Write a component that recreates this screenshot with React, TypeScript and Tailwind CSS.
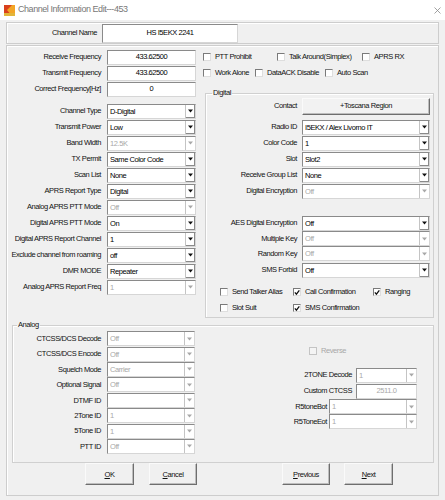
import * as React from "react"

const sunken =
  "border border-t-[#8a8a8a] border-l-[#8a8a8a] border-r-[#d6d6d6] border-b-[#d6d6d6] bg-white"

const Arrow = ({ off }: { off?: boolean }) => (
  <svg width="5" height="4" viewBox="0 0 5 4">
    <polygon points="0,0.5 5,0.5 2.5,3.5" fill={off ? "#a8a8a8" : "#111"} />
  </svg>
)

const Select = ({ value, off, w }: { value: string; off?: boolean; w: string }) => (
  <div className={`flex h-[15px] ${w} ${sunken}`}>
    <span className={`flex-1 truncate pl-[2px] leading-[13px] ${off ? "text-[#a8a8a8]" : "text-black"}`}>
      {value}
    </span>
    <span
      className={`flex w-[10px] items-center justify-center border-l border-[#c4c4c4] ${
        off ? "" : "shadow-[inset_-1px_-1px_0_#8a8a8a]"
      }`}
    >
      <Arrow off={off} />
    </span>
  </div>
)

const Input = ({ value, off, w, h }: { value: string; off?: boolean; w: string; h?: string }) => (
  <div className={`flex items-center justify-center ${h ?? "h-[15px]"} ${w} ${sunken} ${off ? "text-[#a8a8a8]" : "text-black"}`}>
    {value}
  </div>
)

const Check = ({ label, on, off, className }: { label: string; on?: boolean; off?: boolean; className?: string }) => (
  <div className={`flex items-center ${className ?? ""}`}>
    <span
      className={`flex h-[8px] w-[8px] shrink-0 items-center justify-center border ${
        off
          ? "border-[#c4c4c4] bg-[#f4f4f4]"
          : "border-t-[#7a7a7a] border-l-[#7a7a7a] border-r-[#dedede] border-b-[#dedede] bg-white"
      }`}
    >
      {on && (
        <svg width="7" height="7" viewBox="0 0 7 7">
          <path d="M1 3.3 L2.8 5.4 L6.2 1" stroke="#111" strokeWidth="1.5" fill="none" />
        </svg>
      )}
    </span>
    <span className={`ml-[4px] whitespace-nowrap ${off ? "text-[#a8a8a8]" : ""}`}>{label}</span>
  </div>
)

const Row = ({ label, lw, h, children }: { label: string; lw: string; h?: string; children: React.ReactNode }) => (
  <div className={`flex items-center ${h ?? "h-[16px]"}`}>
    <span className={`${lw} shrink-0 whitespace-nowrap text-right`}>{label}</span>
    {children}
  </div>
)

const Btn = ({ u, rest, ml, w }: { u: string; rest: string; ml: string; w: string }) => (
  <div
    className={`${ml} ${w} flex h-[22px] items-center justify-center border border-t-[#fafafa] border-l-[#fafafa] border-r-[#6e6e6e] border-b-[#6e6e6e] bg-[#f0f0f0] shadow-[inset_-1px_-1px_0_#bdbdbd]`}
  >
    <span className="underline decoration-[0.5px] underline-offset-1">{u}</span>
    {rest}
  </div>
)

const leftRows: { label: string; value: string; off?: boolean }[] = [
  { label: "Channel Type", value: "D-Digital" },
  { label: "Transmit Power", value: "Low" },
  { label: "Band Width", value: "12.5K", off: true },
  { label: "TX Permit", value: "Same Color Code" },
  { label: "Scan List", value: "None" },
  { label: "APRS Report Type", value: "Digital" },
  { label: "Analog APRS PTT Mode", value: "Off", off: true },
  { label: "Digital APRS PTT Mode", value: "On" },
  { label: "Digital APRS Report Channel", value: "1" },
  { label: "Exclude channel from roaming", value: "off" },
  { label: "DMR MODE", value: "Repeater" },
  { label: "Analog APRS Report Freq", value: "1", off: true },
]

const analogRows: { label: string; value: string }[] = [
  { label: "CTCSS/DCS Decode", value: "Off" },
  { label: "CTCSS/DCS Encode", value: "Off" },
  { label: "Squelch Mode", value: "Carrier" },
  { label: "Optional Signal", value: "Off" },
  { label: "DTMF ID", value: "" },
  { label: "2Tone ID", value: "1" },
  { label: "5Tone ID", value: "1" },
  { label: "PTT ID", value: "Off" },
]

export default function App() {
  return (
    <div className="h-[500px] w-[445px] overflow-hidden bg-[#f0f0f0] font-['Liberation_Sans',Arial,sans-serif] text-[7.5px] tracking-[-0.42px] text-[#111]">
      {/* title bar */}
      <div className="flex h-[20px] items-center bg-white">
        <svg className="ml-[4px]" width="11" height="11" viewBox="0 0 11 11">
          <rect x="0" y="0" width="11" height="11" fill="#f3a526" />
          <polygon points="0,0 8,0 3,5 8,11 0,11" fill="#d9401c" />
          <rect x="0" y="8" width="11" height="3" fill="#e2b53a" />
        </svg>
        <span className="ml-[3px] text-[9px] tracking-[-0.45px] text-[#777]">Channel Information Edit---453</span>
        <svg className="ml-auto mr-[4px]" width="7" height="7" viewBox="0 0 7 7">
          <path d="M0.5 0.5 L6.5 6.5 M6.5 0.5 L0.5 6.5" stroke="#8a8a8a" strokeWidth="0.8" />
        </svg>
      </div>

      <div className="px-[6px] pt-[2px]">
        {/* channel name */}
        <div className="flex h-[22px] items-center border border-[#cdcdcd] shadow-[inset_1px_1px_0_#fff]">
          <span className="w-[90px] text-right">Channel Name</span>
          <Input value="HS I5EKX 2241" w="w-[136px] ml-[5px]" h="h-[19px]" />
        </div>

        {/* main panel */}
        <div className="mt-px border border-[#cdcdcd] pt-[3px] pb-[10px] shadow-[inset_1px_1px_0_#fff]">
          <div className="flex">
            <div className="w-[193px] shrink-0">
              <Row label="Receive Frequency" lw="w-[94px]">
                <Input value="433.62500" w="w-[89px] ml-[6px]" />
              </Row>
              <Row label="Transmit Frequency" lw="w-[94px]">
                <Input value="433.62500" w="w-[89px] ml-[6px]" />
              </Row>
              <Row label="Correct Frequency[Hz]" lw="w-[94px]">
                <Input value="0" w="w-[89px] ml-[6px]" />
              </Row>
              <div className="mt-[6px]">
                {leftRows.map((r) => (
                  <Row key={r.label} label={r.label} lw="w-[94px]">
                    <Select value={r.value} off={r.off} w="w-[89px] ml-[6px]" />
                  </Row>
                ))}
              </div>
            </div>

            <div className="flex-1">
              <div className="flex h-[16px] items-center pl-[3px]">
                <Check label="PTT Prohibit" className="w-[74px]" />
                <Check label="Talk Around(Simplex)" className="w-[85px]" />
                <Check label="APRS RX" />
              </div>
              <div className="flex h-[16px] items-center pl-[3px]">
                <Check label="Work Alone" className="w-[52px]" />
                <Check label="DataACK Disable" className="w-[70px]" />
                <Check label="Auto Scan" />
              </div>

              <fieldset className="mt-[8px] ml-[5px] w-[229px] border border-[#d0d0d0] pb-px shadow-[inset_1px_1px_0_#fff]">
                <legend className="ml-[6px] px-px leading-[8px]">Digital</legend>
                <Row label="Contact" lw="w-[91px]" h="h-[18px]">
                  <div className="ml-[5px] flex h-[17px] w-[128px] items-center justify-center border border-t-[#fafafa] border-l-[#fafafa] border-r-[#6e6e6e] border-b-[#6e6e6e] bg-[#f2f2f2] shadow-[inset_-1px_-1px_0_#bdbdbd]">
                    +Toscana Region
                  </div>
                </Row>
                <div className="mt-[4px]">
                  <Row label="Radio ID" lw="w-[91px]">
                    <Select value="I5EKX / Alex Livorno IT" w="w-[128px] ml-[5px]" />
                  </Row>
                  <Row label="Color Code" lw="w-[91px]">
                    <Select value="1" w="w-[128px] ml-[5px]" />
                  </Row>
                  <Row label="Slot" lw="w-[91px]">
                    <Select value="Slot2" w="w-[128px] ml-[5px]" />
                  </Row>
                  <Row label="Receive Group List" lw="w-[91px]">
                    <Select value="None" w="w-[128px] ml-[5px]" />
                  </Row>
                  <Row label="Digital Encryption" lw="w-[91px]">
                    <Select value="Off" off w="w-[128px] ml-[5px]" />
                  </Row>
                </div>
                <div className="mt-[16px]">
                  <Row label="AES Digital Encryption" lw="w-[91px]">
                    <Select value="Off" w="w-[128px] ml-[5px]" />
                  </Row>
                  <Row label="Multiple Key" lw="w-[91px]" h="h-[15px]">
                    <Select value="Off" off w="w-[128px] ml-[5px]" />
                  </Row>
                  <Row label="Random Key" lw="w-[91px]" h="h-[15px]">
                    <Select value="Off" off w="w-[128px] ml-[5px]" />
                  </Row>
                  <div className="mt-px">
                    <Row label="SMS Forbid" lw="w-[91px]">
                      <Select value="Off" w="w-[128px] ml-[5px]" />
                    </Row>
                  </div>
                </div>
                <div className="mt-[6px] pl-[14px]">
                  <div className="flex h-[16px] items-center">
                    <Check label="Send Talker Alias" className="w-[73px]" />
                    <Check label="Call Confirmation" on className="w-[80px]" />
                    <Check label="Ranging" on />
                  </div>
                  <div className="flex h-[16px] items-center">
                    <Check label="Slot Suit" className="w-[73px]" />
                    <Check label="SMS Confirmation" on />
                  </div>
                </div>
              </fieldset>
            </div>
          </div>

          {/* analog */}
          <fieldset className="mt-[3px] ml-[5px] w-[422px] border border-[#d0d0d0] pt-[2px] pb-[8px] shadow-[inset_1px_1px_0_#fff]">
            <legend className="ml-[4px] px-px leading-[8px]">Analog</legend>
            <div className="flex">
              <div className="w-[182px] shrink-0">
                {analogRows.map((r) => (
                  <Row key={r.label} label={r.label} lw="w-[88px]" h="h-[15.4px]">
                    <Select value={r.value} off w="w-[88px] ml-[6px]" />
                  </Row>
                ))}
              </div>
              <div className="flex-1 pr-[16px]">
                <div className="mt-[14px] flex h-[12px] items-center pl-[114px]">
                  <Check label="Reverse" off />
                </div>
                <div className="mt-[10px] flex h-[16px] items-center justify-end">
                  <span>2TONE Decode</span>
                  <Select value="1" off w="w-[61px] ml-[4px]" />
                </div>
                <div className="flex h-[16px] items-center justify-end">
                  <span>Custom CTCSS</span>
                  <Input value="2511.0" off w="w-[61px] ml-[4px]" />
                </div>
                <div className="flex h-[15px] items-center justify-end">
                  <span>R5toneBot</span>
                  <Select value="1" off w="w-[88px] ml-[2px]" />
                </div>
                <div className="flex h-[15px] items-center justify-end">
                  <span>R5ToneEot</span>
                  <Select value="1" off w="w-[88px] ml-[2px]" />
                </div>
              </div>
            </div>
          </fieldset>

          {/* buttons */}
          <div className="flex">
            <Btn u="O" rest="K" ml="ml-[78px]" w="w-[49px]" />
            <Btn u="C" rest="ancel" ml="ml-[15px]" w="w-[48px]" />
            <Btn u="P" rest="revious" ml="ml-[85px]" w="w-[48px]" />
            <Btn u="N" rest="ext" ml="ml-[14px]" w="w-[49px]" />
          </div>
        </div>
      </div>
    </div>
  )
}
